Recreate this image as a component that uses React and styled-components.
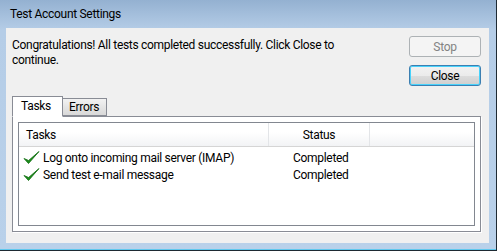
import React from 'react';
import styled, { createGlobalStyle } from 'styled-components';

const Global = createGlobalStyle`
  html, body { margin: 0; padding: 0; }
  body {
    font-family: Roboto, "Liberation Sans", sans-serif;
    font-size: 12px;
    letter-spacing: -0.3px;
    color: #000;
  }
`;

const Window = styled.div`
  width: 497px;
  height: 251px;
  box-sizing: border-box;
  display: flex;
  flex-direction: column;
  background: linear-gradient(to bottom, #94b1d1 0px, #b5cde7 30px, #b9d1ea 100%);
  border-right: 1px solid #1e2a33;
  border-bottom: 1px solid #1e2a33;
  box-shadow: inset 0 -1px 0 #5fc8ee;
  padding: 0 7px 7px 6px;
`;

const TitleBar = styled.div`
  height: 28px;
  display: flex;
  align-items: center;
  padding-left: 4px;
  padding-bottom: 1px;
  box-sizing: border-box;
  font-size: 12px;
`;

const Client = styled.div`
  flex: 1;
  background: #f0f0f0;
  display: flex;
  flex-direction: column;
  padding: 8px 8px 11px 6px;
`;

const Top = styled.div`
  display: flex;
  justify-content: space-between;
  height: 60px;
`;

const Message = styled.div`
  width: 340px;
  line-height: 15px;
  padding-top: 2px;
`;

const Buttons = styled.div`
  display: flex;
  flex-direction: column;
  gap: 8px;
`;

const Button = styled.div`
  width: 72px;
  height: 21px;
  box-sizing: border-box;
  display: flex;
  align-items: center;
  justify-content: center;
  border-radius: 3px;
  border: 1px solid ${p => (p.$primary ? '#3c7fb1' : '#adb2b5')};
  background: ${p =>
    p.$primary
      ? 'linear-gradient(to bottom, #f2f2f2 0%, #ebebeb 50%, #dddddd 51%, #cfcfcf 100%)'
      : '#f4f4f4'};
  box-shadow: ${p => (p.$primary ? 'inset 0 0 0 1px #48d2fb' : 'none')};
  color: ${p => (p.$primary ? '#000' : '#838383')};
`;

const Tabs = styled.div`
  display: flex;
  align-items: flex-end;
  position: relative;
  z-index: 1;
`;

const Tab = styled.div`
  box-sizing: border-box;
  height: ${p => (p.$active ? '21px' : '18px')};
  padding: ${p => (p.$active ? '2px 0 0 8px' : '1px 0 0 6px')};
  width: ${p => (p.$active ? '51px' : '44px')};
  border: 1px solid #898c95;
  border-bottom: ${p => (p.$active ? '1px solid #fff' : '1px solid #898c95')};
  border-left: ${p => (p.$active ? '1px solid #898c95' : 'none')};
  margin-bottom: ${p => (p.$active ? '-1px' : '0')};
  background: ${p => (p.$active ? '#fff' : 'linear-gradient(to bottom, #f2f2f2, #e5e5e5 50%, #d9d9d9)')};
  display: flex;
  align-items: flex-start;
`;

const Panel = styled.div`
  flex: 1;
  background: #fff;
  border: 1px solid #898c95;
  box-shadow: 1px 1px 0 #fff;
  padding: 5px;
  display: flex;
`;

const ListBox = styled.div`
  flex: 1;
  border: 1px solid #828790;
  display: flex;
  flex-direction: column;
`;

const HeaderRow = styled.div`
  display: flex;
  height: 23px;
  background: linear-gradient(to bottom, #ffffff 0%, #ffffff 40%, #f2f3f5 100%);
  border-bottom: 1px solid #d5d5d5;
`;

const HeaderCell = styled.div`
  width: ${p => p.$w}px;
  box-sizing: border-box;
  display: flex;
  align-items: center;
  justify-content: ${p => (p.$center ? 'center' : 'flex-start')};
  padding-left: ${p => (p.$center ? 0 : 7)}px;
  border-right: ${p => (p.$last ? 'none' : '1px solid #e3e5e8')};
  flex: ${p => (p.$last ? 1 : 'none')};
`;

const Rows = styled.div`
  padding-top: 2px;
`;

const Row = styled.div`
  display: flex;
  height: 17px;
  align-items: center;
`;

const TaskCell = styled.div`
  width: 250px;
  display: flex;
  align-items: center;
  padding-left: 4px;
  box-sizing: border-box;
  gap: 3px;
`;

const StatusCell = styled.div`
  padding-left: 24px;
`;

const Check = () => (
  <svg width="17" height="15" viewBox="0 0 17 15">
    <path d="M1 8.5 L5.5 13.5 L16 1.5 L5.6 10.5 Z" fill="#1d8f1d" stroke="#0c6b0c" strokeWidth="0.8" strokeLinejoin="round" />
  </svg>
);

const tasks = ['Log onto incoming mail server (IMAP)', 'Send test e-mail message'];

export default function App() {
  return (
    <>
      <Global />
      <Window>
        <TitleBar>Test Account Settings</TitleBar>
        <Client>
          <Top>
            <Message>
              Congratulations! All tests completed successfully. Click Close to continue.
            </Message>
            <Buttons>
              <Button>Stop</Button>
              <Button $primary>Close</Button>
            </Buttons>
          </Top>
          <Tabs>
            <Tab $active>Tasks</Tab>
            <Tab>Errors</Tab>
          </Tabs>
          <Panel>
            <ListBox>
              <HeaderRow>
                <HeaderCell $w={250}>Tasks</HeaderCell>
                <HeaderCell $w={101} $center>Status</HeaderCell>
                <HeaderCell $last />
              </HeaderRow>
              <Rows>
                {tasks.map(t => (
                  <Row key={t}>
                    <TaskCell>
                      <Check />
                      {t}
                    </TaskCell>
                    <StatusCell>Completed</StatusCell>
                  </Row>
                ))}
              </Rows>
            </ListBox>
          </Panel>
        </Client>
      </Window>
    </>
  );
}
